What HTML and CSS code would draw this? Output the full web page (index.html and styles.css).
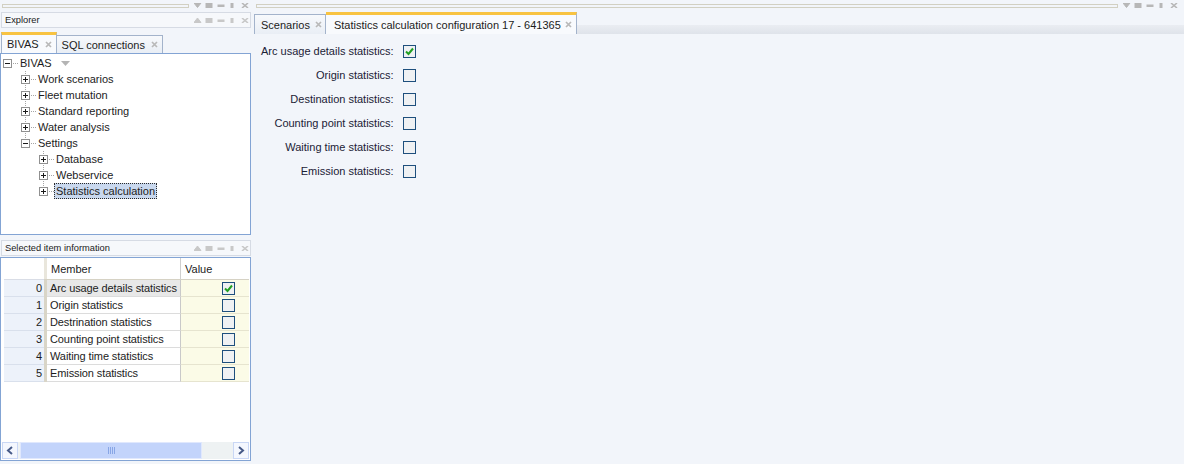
FILE: index.html
```html
<!DOCTYPE html>
<html lang="en">
<head>
    <meta charset="UTF-8">
    <meta name="viewport" content="width=device-width, initial-scale=1.0">
    <title>BIVAS</title>
    <link rel="stylesheet" href="styles.css">
</head>
<body>
<div class="app">
    <div class="side">
        <div class="dockbar">
            <div class="dockline"></div>
            <svg class="dockbtns" width="55" height="5" viewBox="0 0 55 5">
                <polygon points="0,0 7,0 3.5,4.5" />
                <rect x="12" y="0" width="6" height="5" />
                <rect x="24" y="2" width="6" height="1.5" />
                <rect x="37" y="0" width="2" height="5" />
                <path d="M48 0L54 5M54 0L48 5" stroke-width="1.6" fill="none" />
            </svg>
        </div>

        <div class="pane-head">
            <span>Explorer</span>
            <svg class="dockbtns light" width="55" height="5" viewBox="0 0 55 5">
                <polygon points="0,4.5 7,4.5 3.5,0" />
                <rect x="12" y="0" width="6" height="5" />
                <rect x="24" y="2" width="6" height="1.5" />
                <rect x="37" y="0" width="2" height="5" />
                <path d="M48 0L54 5M54 0L48 5" stroke-width="1.6" fill="none" />
            </svg>
        </div>

        <div class="tabs">
            <div class="tab active">BIVAS <svg class="close" width="7" height="7"><path d="M1 1L6 6M6 1L1 6" /></svg></div>
            <div class="tab">SQL connections <svg class="close" width="7" height="7"><path d="M1 1L6 6M6 1L1 6" /></svg></div>
        </div>

        <div class="tree">
            <div class="node l0">
                <svg class="exp" width="9" height="9"><rect x="0.5" y="0.5" width="8" height="8" /><path d="M2 4.5H7" /></svg>
                <span class="dots"></span><span class="label">BIVAS</span>
                <svg class="drop" width="9" height="5"><polygon points="0,0 9,0 4.5,5" /></svg>
            </div>
            <div class="node l1 vline">
                <svg class="exp" width="9" height="9"><rect x="0.5" y="0.5" width="8" height="8" /><path d="M2 4.5H7M4.5 2V7" /></svg>
                <span class="dots"></span><span class="label">Work scenarios</span>
            </div>
            <div class="node l1 vline">
                <svg class="exp" width="9" height="9"><rect x="0.5" y="0.5" width="8" height="8" /><path d="M2 4.5H7M4.5 2V7" /></svg>
                <span class="dots"></span><span class="label">Fleet mutation</span>
            </div>
            <div class="node l1 vline">
                <svg class="exp" width="9" height="9"><rect x="0.5" y="0.5" width="8" height="8" /><path d="M2 4.5H7M4.5 2V7" /></svg>
                <span class="dots"></span><span class="label">Standard reporting</span>
            </div>
            <div class="node l1 vline">
                <svg class="exp" width="9" height="9"><rect x="0.5" y="0.5" width="8" height="8" /><path d="M2 4.5H7M4.5 2V7" /></svg>
                <span class="dots"></span><span class="label">Water analysis</span>
            </div>
            <div class="node l1 vline last">
                <svg class="exp" width="9" height="9"><rect x="0.5" y="0.5" width="8" height="8" /><path d="M2 4.5H7" /></svg>
                <span class="dots"></span><span class="label">Settings</span>
            </div>
            <div class="node l2 vline">
                <svg class="exp" width="9" height="9"><rect x="0.5" y="0.5" width="8" height="8" /><path d="M2 4.5H7M4.5 2V7" /></svg>
                <span class="dots"></span><span class="label">Database</span>
            </div>
            <div class="node l2 vline">
                <svg class="exp" width="9" height="9"><rect x="0.5" y="0.5" width="8" height="8" /><path d="M2 4.5H7M4.5 2V7" /></svg>
                <span class="dots"></span><span class="label">Webservice</span>
            </div>
            <div class="node l2 vline last">
                <svg class="exp" width="9" height="9"><rect x="0.5" y="0.5" width="8" height="8" /><path d="M2 4.5H7M4.5 2V7" /></svg>
                <span class="dots"></span><span class="label selected">Statistics calculation</span>
            </div>
        </div>

        <div class="pane-head second">
            <span>Selected item information</span>
            <svg class="dockbtns light" width="55" height="5" viewBox="0 0 55 5">
                <polygon points="0,4.5 7,4.5 3.5,0" />
                <rect x="12" y="0" width="6" height="5" />
                <rect x="24" y="2" width="6" height="1.5" />
                <rect x="37" y="0" width="2" height="5" />
                <path d="M48 0L54 5M54 0L48 5" stroke-width="1.6" fill="none" />
            </svg>
        </div>

        <div class="grid-box">
            <div class="dg">
                <div class="h-rh"></div><div class="h-sp"></div>
                <div class="h-col">Member</div><div class="h-col last">Value</div>

                <div class="rh">0</div><div class="sp"></div>
                <div class="mem sel">Arc usage details statistics</div>
                <div class="val"><svg class="cb" width="13" height="13"><rect x="0.5" y="0.5" width="12" height="12" /><path class="tick" d="M3 6.5L5.5 9L10 3.5" /></svg></div>

                <div class="rh">1</div><div class="sp"></div>
                <div class="mem">Origin statistics</div>
                <div class="val"><svg class="cb" width="13" height="13"><rect x="0.5" y="0.5" width="12" height="12" /></svg></div>

                <div class="rh">2</div><div class="sp"></div>
                <div class="mem">Destrination statistics</div>
                <div class="val"><svg class="cb" width="13" height="13"><rect x="0.5" y="0.5" width="12" height="12" /></svg></div>

                <div class="rh">3</div><div class="sp"></div>
                <div class="mem">Counting point statistics</div>
                <div class="val"><svg class="cb" width="13" height="13"><rect x="0.5" y="0.5" width="12" height="12" /></svg></div>

                <div class="rh">4</div><div class="sp"></div>
                <div class="mem">Waiting time statistics</div>
                <div class="val"><svg class="cb" width="13" height="13"><rect x="0.5" y="0.5" width="12" height="12" /></svg></div>

                <div class="rh">5</div><div class="sp"></div>
                <div class="mem">Emission statistics</div>
                <div class="val"><svg class="cb" width="13" height="13"><rect x="0.5" y="0.5" width="12" height="12" /></svg></div>
            </div>

            <div class="hscroll">
                <div class="sbtn"><svg width="8" height="9"><path d="M6 1L2 4.5L6 8" /></svg></div>
                <div class="thumb"><span class="grip"></span></div>
                <div class="track"></div>
                <div class="sbtn"><svg width="8" height="9"><path d="M2 1L6 4.5L2 8" /></svg></div>
            </div>
        </div>
    </div>

    <div class="main">
        <div class="dockbar">
            <div class="dockline"></div>
            <svg class="dockbtns" width="55" height="5" viewBox="0 0 55 5">
                <polygon points="0,0 7,0 3.5,4.5" />
                <rect x="12" y="0" width="6" height="5" />
                <rect x="24" y="2" width="6" height="1.5" />
                <rect x="37" y="0" width="2" height="5" />
                <path d="M48 0L54 5M54 0L48 5" stroke-width="1.6" fill="none" />
            </svg>
        </div>

        <div class="doc-tabs">
            <div class="tab">Scenarios <svg class="close" width="7" height="7"><path d="M1 1L6 6M6 1L1 6" /></svg></div>
            <div class="tab active">Statistics calculation configuration 17 - 641365 <svg class="close" width="7" height="7"><path d="M1 1L6 6M6 1L1 6" /></svg></div>
        </div>

        <div class="form">
            <label>Arc usage details statistics:</label>
            <svg class="cb" width="13" height="13"><rect x="0.5" y="0.5" width="12" height="12" /><path class="tick" d="M3 6.5L5.5 9L10 3.5" /></svg>
            <label>Origin statistics:</label>
            <svg class="cb" width="13" height="13"><rect x="0.5" y="0.5" width="12" height="12" /></svg>
            <label>Destination statistics:</label>
            <svg class="cb" width="13" height="13"><rect x="0.5" y="0.5" width="12" height="12" /></svg>
            <label>Counting point statistics:</label>
            <svg class="cb" width="13" height="13"><rect x="0.5" y="0.5" width="12" height="12" /></svg>
            <label>Waiting time statistics:</label>
            <svg class="cb" width="13" height="13"><rect x="0.5" y="0.5" width="12" height="12" /></svg>
            <label>Emission statistics:</label>
            <svg class="cb" width="13" height="13"><rect x="0.5" y="0.5" width="12" height="12" /></svg>
        </div>
    </div>
</div>
</body>
</html>
```

FILE: styles.css
```css
body {
    margin: 0;
    background-color: #f2f5fa;
    font-family: "Liberation Sans", Arial, sans-serif;
    font-size: 11px;
    color: #1c1c1c;
}
.app {
    display: flex;
    height: 464px;
    overflow: hidden;
}
.side {
    width: 251px;
    flex: none;
    display: flex;
    flex-direction: column;
}
.main {
    flex: 1;
    display: flex;
    flex-direction: column;
    padding-left: 3px;
}

/* dock bars with the little window buttons */
.dockbar {
    height: 11px;
    display: flex;
    align-items: center;
    gap: 5px;
    padding: 0 2px 0 2px;
}
.main .dockbar {
    padding-right: 6px;
}
.dockline {
    flex: 1;
    height: 2px;
    border: 1px solid #d2d0c2;
}
.dockbtns {
    flex: none;
    fill: #b7b7b7;
    stroke: #b7b7b7;
}
.dockbtns.light {
    fill: #c8c8c8;
    stroke: #c8c8c8;
}
.pane-head {
    margin: 1px 0 0 1px;
    height: 14px;
    border: 1px solid #d6dbe4;
    background-color: #f6f8fb;
    display: flex;
    align-items: center;
    justify-content: space-between;
    padding: 0 1px 0 3px;
    font-size: 9.3px;
    color: #1a1a1a;
}
.pane-head.second {
    margin-top: 5px;
}

/* tabs */
.tabs {
    display: flex;
    align-items: flex-end;
    height: 22px;
    margin-top: 3px;
    padding-left: 1px;
}
.tab {
    height: 18px;
    box-sizing: border-box;
    border: 1px solid #a3b3cb;
    border-bottom: none;
    display: flex;
    align-items: center;
    gap: 6px;
    padding: 0 4px 0 5px;
    background: linear-gradient(#f7f9fc, #e9eef5);
    color: #1c1c1c;
}
.tab + .tab {
    border-left: none;
}
.tab.active {
    height: 21px;
    border-top: 3px solid #f8c341;
    background: #f8fafd;
    padding-left: 5px;
}
.close {
    stroke: #b9b9b9;
    stroke-width: 1.7;
    fill: none;
}
.doc-tabs {
    display: flex;
    align-items: flex-end;
    height: 22px;
    margin-top: 1px;
    background: linear-gradient(to bottom, transparent 0, transparent 13px, #eaedf2 13px, #dfe3ea 22px);
}
.doc-tabs .tab {
    height: 20px;
    gap: 5px;
    padding: 0 3px 0 6px;
}
.doc-tabs .tab.active {
    height: 22px;
    padding: 0 4px 0 8px;
    gap: 4px;
}

/* tree view */
.tree {
    height: 179px;
    border: 1px solid #83a4d4;
    background-color: #ffffff;
    padding-top: 1px;
}
.node {
    height: 16px;
    display: flex;
    align-items: center;
    background-image: repeating-linear-gradient(to bottom, #a5a5a5 0, #a5a5a5 1px, transparent 1px, transparent 2px);
    background-repeat: no-repeat;
    background-size: 0 0;
}
.node.l0 { padding-left: 2px; }
.node.l1 { padding-left: 20px; background-position: 24px 0; }
.node.l2 { padding-left: 38px; background-position: 42px 0; }
.node.vline { background-size: 1px 100%; }
.node.vline.last { background-size: 1px 50%; }
.exp {
    flex: none;
    fill: #ffffff;
    stroke: #909090;
}
.exp path {
    stroke: #1a1a1a;
}
.dots {
    width: 5px;
    height: 1px;
    margin-left: 1px;
    background: repeating-linear-gradient(to right, #a5a5a5 0, #a5a5a5 1px, transparent 1px, transparent 2px);
}
.label {
    padding: 1px 1px;
    border: 1px dotted transparent;
    line-height: 12px;
}
.label.selected {
    background-color: #c9d8ee;
    border-color: #2a2a2a;
}
.drop {
    margin-left: 7px;
    fill: #b4b4b4;
}

/* property grid */
.grid-box {
    flex: 1;
    margin: 1px 0 3px 0;
    border: 1px solid #83a4d4;
    background-color: #ffffff;
    display: flex;
    flex-direction: column;
}
.dg {
    display: grid;
    grid-template-columns: 40px 3px 134px 68px;
    grid-template-rows: 22px;
    grid-auto-rows: 17px;
    margin-left: 3px;
}
.dg > div {
    box-sizing: border-box;
    display: flex;
    align-items: center;
}
.h-rh {
    background-color: #ffffff;
    border-bottom: 1px solid #d9dde6;
}
.h-sp {
    background-color: #e9e6dc;
    border-bottom: 1px solid #d6d2c4;
}
.h-col {
    padding-left: 4px;
    border-bottom: 1px solid #d6d2c4;
    border-right: 1px solid #cfcfcf;
    background-color: #ffffff;
}
.h-col.last {
    border-right: none;
}
.rh {
    justify-content: flex-end;
    padding-right: 2px;
    background-color: #edf2fa;
    border-bottom: 1px solid #d9e0ec;
}
.sp {
    background-color: #d9d5c7;
}
.mem {
    padding-left: 3px;
    border-bottom: 1px solid #dcdcdc;
    border-right: 1px solid #c9c9c9;
    background-color: #ffffff;
    letter-spacing: -0.1px;
}
.mem.sel {
    background-color: #e8e8e8;
}
.val {
    justify-content: flex-end;
    padding-right: 14px;
    background-color: #fbfbe7;
    border-bottom: 1px solid #e6e4cf;
}
.cb {
    flex: none;
    fill: #eff1f3;
    stroke: #1e4f7d;
}
.cb .tick {
    fill: none;
    stroke: #22a022;
    stroke-width: 2;
}
.hscroll {
    margin: auto 1px 1px 1px;
    height: 17px;
    display: flex;
    align-items: stretch;
    background-color: #eef2f3;
}
.sbtn {
    width: 14px;
    border: 1px solid #c9d7f5;
    background-color: #f4f7fe;
    display: flex;
    align-items: center;
    justify-content: center;
}
.sbtn svg {
    fill: none;
    stroke: #465a88;
    stroke-width: 2;
}
.thumb {
    width: 180px;
    margin-left: 2px;
    border: 1px solid #e0e8fd;
    background-color: #c3d4fb;
    display: flex;
    align-items: center;
    justify-content: center;
}
.grip {
    width: 7px;
    height: 7px;
    background: repeating-linear-gradient(to right, #88a6e6 0, #88a6e6 1px, transparent 1px, transparent 2px);
}
.track {
    flex: 1;
}

/* configuration form */
.form {
    display: grid;
    grid-template-columns: max-content 13px;
    grid-auto-rows: 24px;
    column-gap: 9px;
    align-items: center;
    padding: 5px 0 0 7px;
}
.form label {
    text-align: right;
    color: #1b2136;
}
```
